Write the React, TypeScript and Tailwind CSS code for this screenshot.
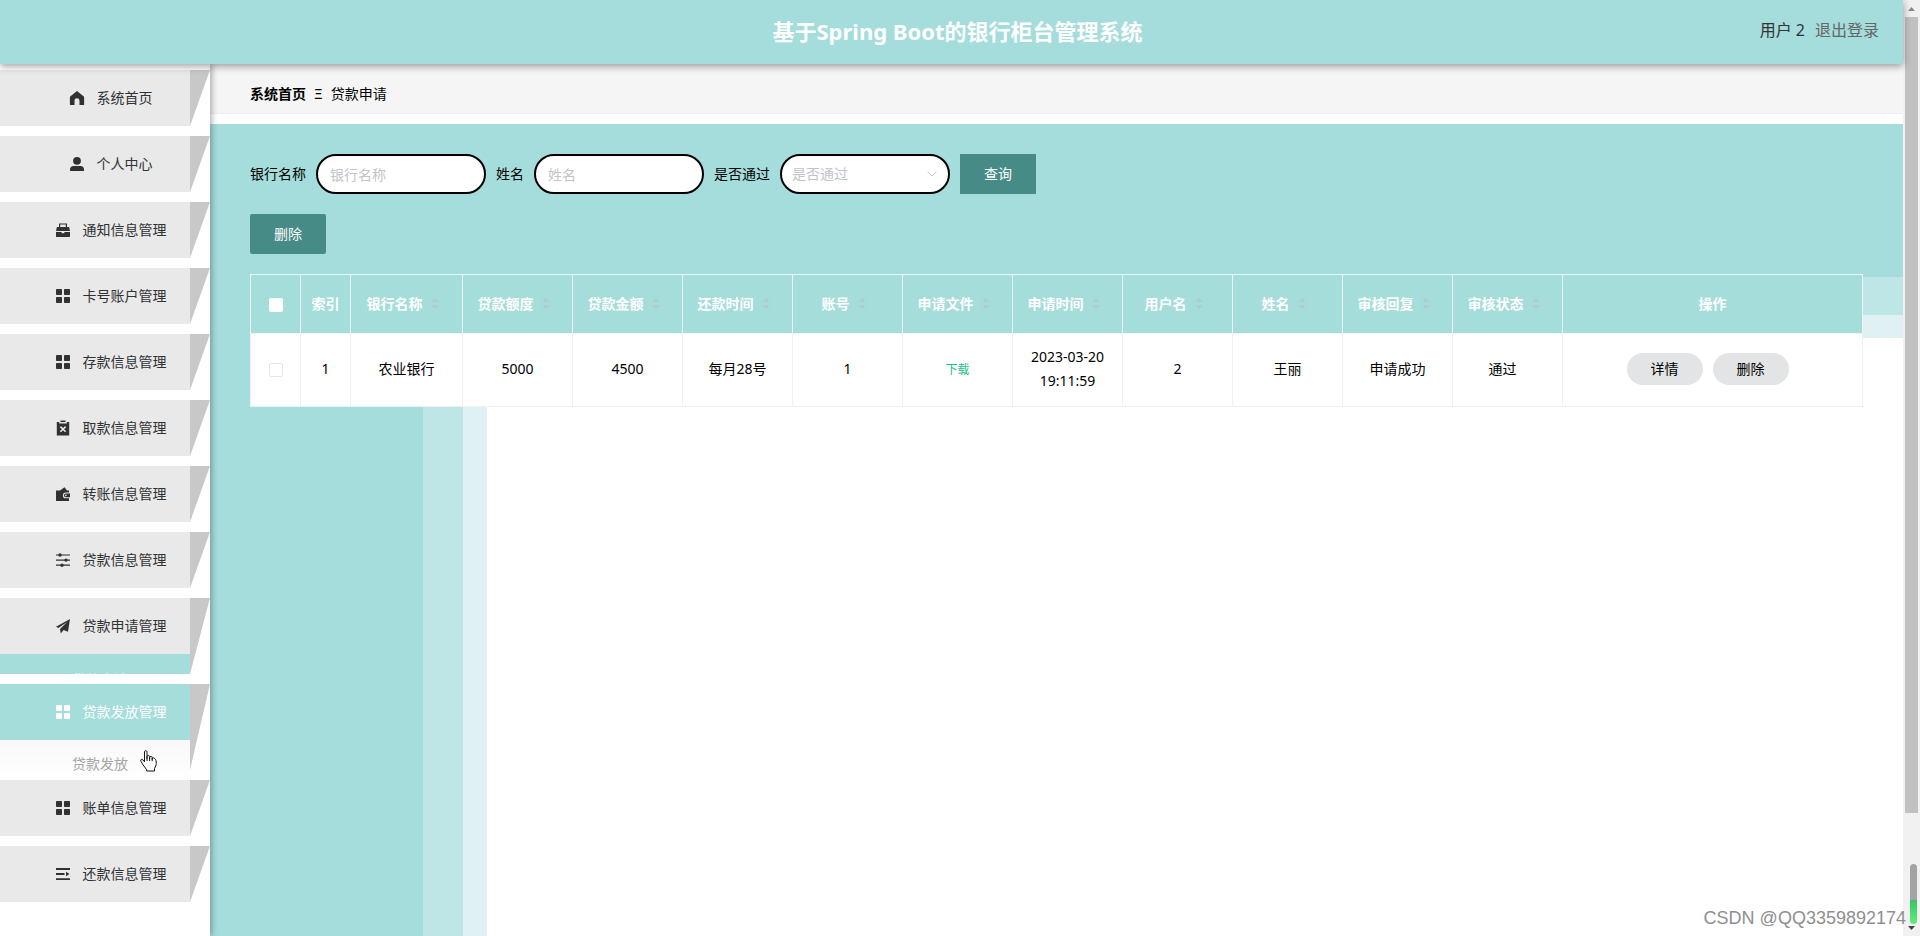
import { type ReactNode } from "react";
import { ChevronDown } from "lucide-react";
import clsx from "clsx";

type IconName = "home" | "user" | "toolbox" | "grid" | "release" | "wallet" | "sliders" | "plane" | "fold";

const icons: Record<IconName, ReactNode> = {
  home: <path d="M9 2 2.2 7.6c-.2.2-.3.4-.3.7V16h4.6v-4.2a2.5 2.5 0 0 1 5 0V16h4.6V8.3c0-.3-.1-.5-.3-.7Z" />,
  user: (
    <>
      <circle cx="9" cy="5.8" r="3.9" />
      <path d="M2 16v-1.6c0-2 1.4-3.4 3.4-3.4h7.2c2 0 3.4 1.4 3.4 3.4V16Z" />
    </>
  ),
  toolbox: (
    <>
      <path d="M5 6.500V2.400h8V6.500h-1.200V3.600H6.200V6.500Z" />
      <path d="M2.900 6h12.200l.9 4H2Z" />
      <path d="M2 11h5.600v1.200h2.800V11H16v5H2Z" />
    </>
  ),
  grid: (
    <>
      <rect x="2" y="2" width="6" height="6" rx=".8" />
      <rect x="10" y="2" width="6" height="6" rx=".8" />
      <rect x="2" y="10" width="6" height="6" rx=".8" />
      <rect x="10" y="10" width="6" height="6" rx=".8" />
    </>
  ),
  release: (
    <>
      <path d="M6.5 1.5h5v1.6h-5Z" />
      <path d="M2.800 3h2.400v1.500h7.600V3h2.400v13.400H2.800Z" />
      <path d="m6.400 7.600 5.200 5.200m0-5.200-5.200 5.200" stroke="#e9e9e9" strokeWidth="1.5" />
    </>
  ),
  wallet: (
    <>
      <path d="M2 5.500h4L10.500 2.300 13 5.500h2v2h-3.200a2.900 2.900 0 0 0 0 5.800H15V16H2Z" />
      <path d="M11.800 8.500H16v3.700h-4.200a1.850 1.850 0 0 1 0-3.700Zm.4 1.100a.8.8 0 1 0 0 1.500.8.8 0 0 0 0-1.500Z" fillRule="evenodd" />
    </>
  ),
  sliders: (
    <>
      <path d="M2 3.400h14v1.200H2ZM2 8.500h14v1.200H2ZM2 13.600h14v1.200H2Z" />
      <circle cx="6" cy="4" r="1.700" />
      <circle cx="12" cy="9.100" r="1.700" />
      <circle cx="8" cy="14.200" r="1.700" />
    </>
  ),
  plane: <path d="m16 2-2 12.800-4.400-1.800-2.800 3.400-.8-4.400L13 5l-8.600 6L2 9.800Z" />,
  fold: <path d="M2 3h14v1.900H2ZM2 8.100h8.500V10H2ZM2 13.200h14v1.900H2ZM12 6.800 15.500 9 12 11.300Z" />,
};

type MenuItem = { label: string; icon: IconName; active?: boolean; child?: "closing" | "opening"; childLabel?: string };

const menu: MenuItem[] = [
  { label: "系统首页", icon: "home" },
  { label: "个人中心", icon: "user" },
  { label: "通知信息管理", icon: "toolbox" },
  { label: "卡号账户管理", icon: "grid" },
  { label: "存款信息管理", icon: "grid" },
  { label: "取款信息管理", icon: "release" },
  { label: "转账信息管理", icon: "wallet" },
  { label: "贷款信息管理", icon: "sliders" },
  { label: "贷款申请管理", icon: "plane", child: "closing", childLabel: "贷款申请" },
  { label: "贷款发放管理", icon: "grid", active: true, child: "opening", childLabel: "贷款发放" },
  { label: "账单信息管理", icon: "grid" },
  { label: "还款信息管理", icon: "fold" },
];

const columns = [
  { label: "银行名称", value: "农业银行" },
  { label: "贷款额度", value: "5000" },
  { label: "贷款金额", value: "4500" },
  { label: "还款时间", value: "每月28号" },
  { label: "账号", value: "1" },
  { label: "申请文件", value: "下载", link: true },
  { label: "申请时间", value: "2023-03-20 19:11:59" },
  { label: "用户名", value: "2" },
  { label: "姓名", value: "王丽" },
  { label: "审核回复", value: "申请成功" },
  { label: "审核状态", value: "通过", tag: true },
];

const SideItem = ({ item }: { item: MenuItem }) => (
  <li className={clsx("flex", item.child !== "opening" && "mb-2.5")}>
    <div className="min-w-0 flex-1">
      <a
        href="#"
        className={clsx(
          "flex h-14 items-center justify-center gap-[11px] pl-[30px]",
          item.active ? "bg-[#a5dddb] text-white" : "bg-[#e9e9e9] text-[#303133]"
        )}
      >
        <svg viewBox="0 0 18 18" className="size-[18px]" fill="currentColor" aria-hidden="true">
          {icons[item.icon]}
        </svg>
        <span>{item.label}</span>
      </a>
      {item.child && (
        <div
          className={clsx(
            "overflow-hidden pl-[72px]",
            item.child === "closing"
              ? "h-5 bg-[#a5dddb] text-white"
              : "h-10 bg-linear-to-b from-[#f8f8fa] to-white text-[#a5a5a5]"
          )}
        >
          <a href="#" className={clsx("block", item.child === "closing" ? "pt-4 leading-5" : "pt-3.5 leading-5")}>
            {item.childLabel}
          </a>
        </div>
      )}
    </div>
    <div
      className={clsx(
        "w-5 bg-[#c8c8c8] [clip-path:polygon(0_0,100%_0,0_100%)]",
        item.child === "opening" && "mb-2.5"
      )}
    />
  </li>
);

const SortCaret = () => (
  <svg viewBox="0 0 24 34" className="h-[34px] w-6 opacity-20" fill="#d08fa8" aria-hidden="true">
    <path d="M8 15l4-4 4 4ZM8 18h8l-4 4Z" />
  </svg>
);

const field = "h-10 w-[170px] rounded-full border-2 border-black bg-white outline-none";
const mainButton = "h-10 w-[76px] bg-[#478b87] text-white";
const rowButton = "mr-2.5 h-8 w-[76px] rounded-full bg-[#e3e4e5]";
const th = "border border-[#eef6f7] p-0 font-bold text-white";
const td = "border border-[#edf1f4] px-2.5 pt-2.5 pb-3 leading-6";

const App = () => {
  return (
    <div className="flex min-h-screen bg-white font-['Noto_Sans','Noto_Sans_CJK_SC',sans-serif] text-sm text-black">
      <div className="flex min-w-0 flex-1 flex-col">
        <header className="relative z-20 grid h-16 grid-cols-[1fr_auto_1fr] items-center bg-[#a5dddc] shadow-[0_2px_8px_rgba(0,0,0,0.4)]">
          <h1 className="col-start-2 pl-3 text-[22px] font-bold text-white">基于Spring Boot的银行柜台管理系统</h1>
          <div className="flex justify-end gap-2.5 pr-6 pb-1 text-base">
            <span className="text-[#333]">用户 2</span>
            <a href="#" className="text-[#666]">退出登录</a>
          </div>
        </header>

        <div className="flex flex-1">
          <nav className="relative z-10 w-[210px] shrink-0 bg-white pt-1.5 shadow-[2px_0_6px_rgba(0,0,0,0.3)]">
            <ul>
              {menu.map((item) => (
                <SideItem key={item.label} item={item} />
              ))}
            </ul>
            {/* hand pointer over the opened submenu */}
            <svg viewBox="0 0 18 22" className="absolute top-[686px] left-[140px] h-[22px] w-[18px]" aria-hidden="true">
              <path
                d="M4.500 1.800c0-1.500 2.500-1.500 2.500 0v6.700-2c0-1.300 2.500-1.200 2.600 0v2.300-1.600c.2-1.100 2.500-1 2.600.2v2-1c.3-1 2.800-.9 3.800 2.200.5 2 .4 3.800-.3 5.400l-1.200 2.600V21H6.600v-1.400L3 14.800.8 11c-.6-1.300.7-2.300 1.900-1.300l1.800 2.200Z"
                fill="#fff"
                stroke="#111"
                strokeWidth="1"
                strokeLinejoin="round"
              />
              <path d="M7 8v3M9.600 8.500V11M12.200 9v2.200" stroke="#111" fill="none" />
            </svg>
          </nav>

          <main className="flex min-w-0 flex-1 flex-col">
            <div className="mb-2.5 flex h-[50px] items-center gap-2 border-b border-[#ebeef5] bg-[#f5f5f5] px-10 pt-2.5">
              <a href="#" className="font-bold">系统首页</a>
              <span>Ξ</span>
              <span>贷款申请</span>
            </div>

            <section className="flex-1 px-10 py-[30px] shadow-[inset_213px_153px_0_#a5dddc,inset_253px_191px_0_#bfe6e7,inset_277px_214px_0_#dff1f2]">
              <form className="mb-5 flex items-center gap-2.5">
                <label htmlFor="bank">银行名称</label>
                <input id="bank" type="text" placeholder="银行名称" className={clsx(field, "px-3 placeholder:text-[#c0c4cc]")} />
                <label htmlFor="name">姓名</label>
                <input id="name" type="text" placeholder="姓名" className={clsx(field, "px-3 placeholder:text-[#c0c4cc]")} />
                <label htmlFor="passed">是否通过</label>
                <div className="relative">
                  <select id="passed" className={clsx(field, "block appearance-none px-2.5 text-[#c0c4cc]")}>
                    <option>是否通过</option>
                  </select>
                  <ChevronDown className="pointer-events-none absolute top-3 right-2.5 size-4 text-[#c0c4cc]" strokeWidth={1.5} />
                </div>
                <button type="button" className={mainButton}>查询</button>
              </form>
              <button type="button" className={clsx(mainButton, "mb-5 block rounded-xs")}>删除</button>

              <table className="w-full table-fixed border-collapse bg-white text-center">
                <colgroup>
                  <col className="w-[50px]" />
                  <col className="w-[50px]" />
                  {columns.map((c, i) => (
                    <col key={c.label} className={i === 0 ? "w-28" : "w-[110px]"} />
                  ))}
                  <col />
                </colgroup>
                <thead className="bg-[#a5dddb]">
                  <tr className="h-[59px]">
                    <th className={th}>
                      <input type="checkbox" aria-label="全选" className="size-3.5 appearance-none rounded-xs bg-white align-middle" />
                    </th>
                    <th className={th}>索引</th>
                    {columns.map((c) => (
                      <th key={c.label} className={th}>
                        <div className="flex items-center justify-center">
                          {c.label}
                          <SortCaret />
                        </div>
                      </th>
                    ))}
                    <th className={th}>操作</th>
                  </tr>
                </thead>
                <tbody>
                  <tr className="h-[73px]">
                    <td className={td}>
                      <input type="checkbox" aria-label="选择" className="size-3.5 appearance-none rounded-xs border border-[#e4e7ed] bg-white align-middle" />
                    </td>
                    <td className={td}>1</td>
                    {columns.map((c) => (
                      <td key={c.label} className={td}>
                        {c.link ? (
                          <a href="#" className="text-xs text-[#1fbf8a]">{c.value}</a>
                        ) : (
                          <span className={clsx(c.tag && "mr-2.5")}>{c.value}</span>
                        )}
                      </td>
                    ))}
                    <td className={td}>
                      <button type="button" className={rowButton}>详情</button>
                      <button type="button" className={rowButton}>删除</button>
                    </td>
                  </tr>
                </tbody>
              </table>
            </section>
          </main>
        </div>
      </div>

      <aside className="sticky top-0 flex h-screen w-[17px] shrink-0 flex-col items-center bg-[#f1f1f1]">
        <svg viewBox="0 0 17 17" className="size-[17px] shrink-0" fill="#8a8a8a" aria-hidden="true">
          <path d="M5 11h7L8.500 7Z" />
        </svg>
        <div className="h-[85%] w-[13px] bg-[#c1c1c1]" />
        <svg viewBox="0 0 17 17" className="mt-auto size-[17px] shrink-0" fill="#444" aria-hidden="true">
          <path d="M5 7h7l-3.500 4Z" />
        </svg>
        <div className="absolute right-[3px] bottom-3 flex h-[60px] w-[7px] flex-col overflow-hidden rounded-full">
          <div className="flex-1 bg-[#a3a3a3]" />
          <div className="h-6 bg-linear-to-b from-[#35c463] to-[#5cf07c]" />
        </div>
        <span className="absolute right-3.5 bottom-2 font-['Liberation_Sans',sans-serif] text-lg leading-5 whitespace-nowrap text-[#8f8f8f]">
          CSDN @QQ3359892174
        </span>
      </aside>
    </div>
  );
};

export default App;
